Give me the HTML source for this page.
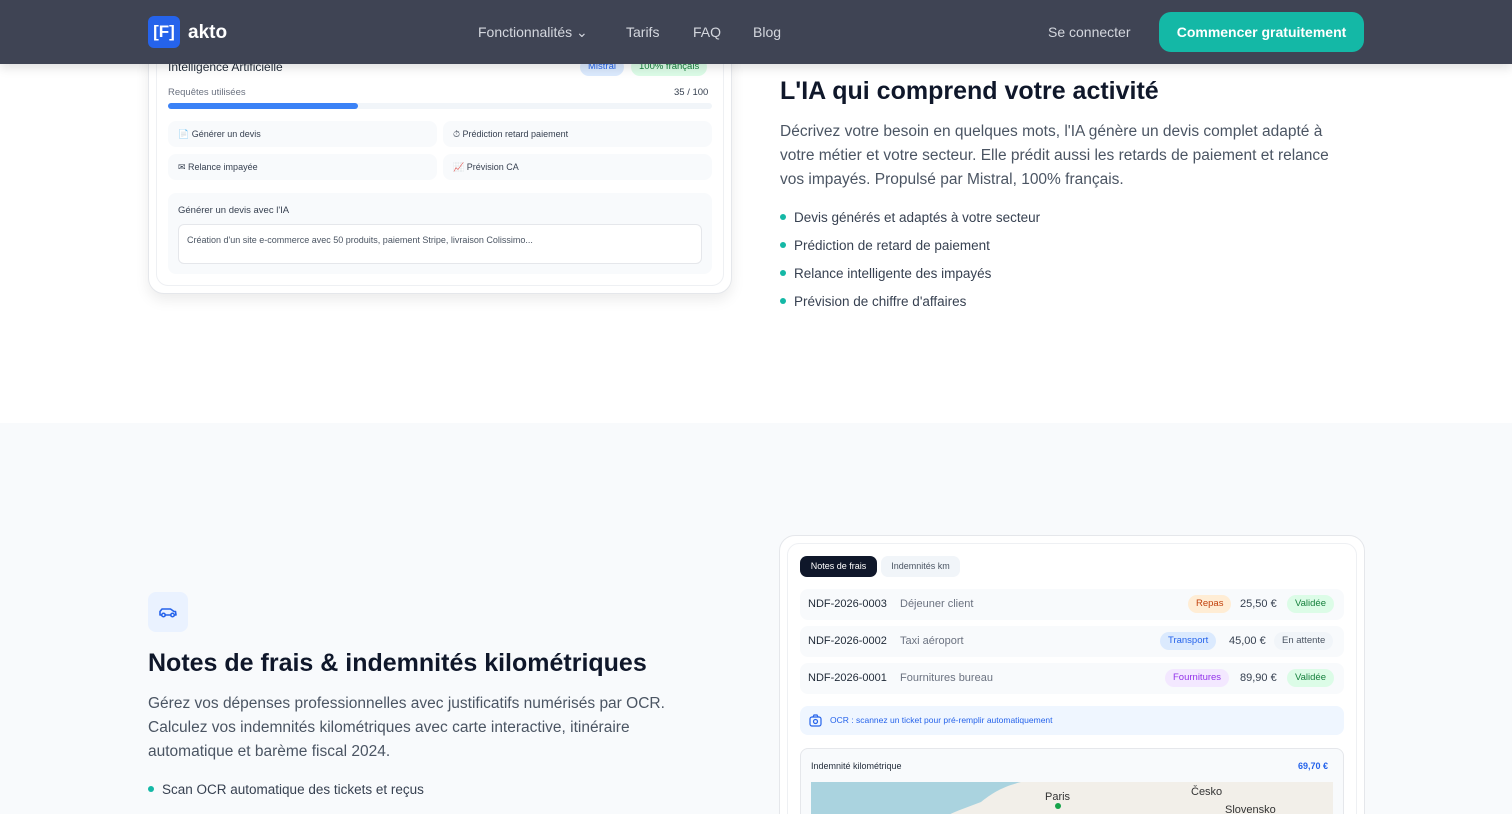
<!DOCTYPE html>
<html><head><meta charset="utf-8"><style>
*{box-sizing:border-box;margin:0;padding:0}
html,body{width:1512px;height:814px;overflow:hidden}
body{font-family:"Liberation Sans",sans-serif;background:#fff;position:relative;color:#0f172a}
.abs{position:absolute}
nav{position:absolute;left:0;top:0;width:1512px;height:64px;background:#3f4454;z-index:10;box-shadow:0 4px 10px rgba(0,0,0,.12)}
.logo{left:148px;top:16px;width:32px;height:32px;background:#2563eb;border-radius:6px;color:#fff;font-weight:bold;font-size:17px;text-align:center;line-height:32px}
.nl{color:#d4d7de;font-size:14px;top:24px}
.btn{left:1159px;top:12px;width:205px;height:40px;background:#14b8a6;border-radius:12px;color:#fff;font-weight:bold;font-size:14px;text-align:center;line-height:40px}
.card{left:148px;top:20px;width:584px;height:274px;border:1px solid #e5e7eb;border-radius:16px;box-shadow:0 6px 14px rgba(0,0,0,.08);background:#fff}
.inner{left:156px;top:28px;width:568px;height:258px;border:1px solid #eef0f3;border-radius:12px}
.pill{background:#f8fafc;border-radius:8px;height:26px;font-size:9px;color:#374151;line-height:26px;padding-left:10px}
.tag{border-radius:10px;font-size:9.5px;height:18px;line-height:18px;padding:0 8px;position:absolute}
h2{font-size:25px;font-weight:bold;color:#0f172a}
.p{font-size:15.5px;line-height:24px;color:#4b5563}
.li{font-size:13.5px;color:#374151}
.li:before{content:"";display:inline-block;width:6px;height:6px;border-radius:50%;background:#14b8a6;margin-right:8px;vertical-align:2px}
.row{left:800px;width:544px;height:31px;background:#f8fafc;border-radius:8px;font-size:11px}
.row .id{position:absolute;left:8px;top:9px;color:#1f2937}
.row .d{position:absolute;left:100px;top:9px;color:#6b7280}
.row .am{position:absolute;top:9px;color:#374151}
</style></head><body>
<div class="abs card"></div>
<div class="abs inner"></div>
<div class="abs" style="left:168px;top:60px;font-size:12px;color:#1f2937">Intelligence Artificielle</div>
<div class="tag" style="left:580px;top:58px;background:#dbeafe;color:#2563eb">Mistral</div>
<div class="tag" style="left:631px;top:58px;background:#dcfce7;color:#15803d">100% français</div>
<div class="abs" style="left:168px;top:87px;font-size:9.5px;color:#6b7280">Requêtes utilisées</div>
<div class="abs" style="left:674px;top:87px;font-size:9.5px;color:#374151">35 / 100</div>
<div class="abs" style="left:168px;top:103px;width:544px;height:6px;background:#f1f5f9;border-radius:3px"><div style="width:190px;height:6px;background:#3b82f6;border-radius:3px"></div></div>
<div class="abs pill" style="left:168px;top:121px;width:269px">📄 Générer un devis</div>
<div class="abs pill" style="left:443px;top:121px;width:269px">⏱ Prédiction retard paiement</div>
<div class="abs pill" style="left:168px;top:154px;width:269px">✉ Relance impayée</div>
<div class="abs pill" style="left:443px;top:154px;width:269px">📈 Prévision CA</div>
<div class="abs" style="left:168px;top:193px;width:544px;height:81px;background:#f8fafc;border-radius:8px"></div>
<div class="abs" style="left:178px;top:205px;font-size:9.5px;color:#374151">Générer un devis avec l'IA</div>
<div class="abs" style="left:178px;top:224px;width:524px;height:40px;background:#fff;border:1px solid #e5e7eb;border-radius:6px;font-size:9px;color:#4b5563;padding:10px 8px">Création d'un site e-commerce avec 50 produits, paiement Stripe, livraison Colissimo...</div>

<h2 class="abs" style="left:780px;top:77px">L'IA qui comprend votre activité</h2>
<div class="abs p" style="left:780px;top:120px;width:572px">Décrivez votre besoin en quelques mots, l'IA génère un devis complet adapté à votre métier et votre secteur. Elle prédit aussi les retards de paiement et relance vos impayés. Propulsé par Mistral, 100% français.</div>
<div class="abs li" style="left:780px;top:210px">Devis générés et adaptés à votre secteur</div>
<div class="abs li" style="left:780px;top:238px">Prédiction de retard de paiement</div>
<div class="abs li" style="left:780px;top:266px">Relance intelligente des impayés</div>
<div class="abs li" style="left:780px;top:294px">Prévision de chiffre d'affaires</div>

<div class="abs" style="left:0;top:423px;width:1512px;height:391px;background:#f8fafc"></div>
<div class="abs" style="left:148px;top:592px;width:40px;height:40px;background:#eaf2ff;border-radius:8px">
<svg width="40" height="40" viewBox="0 0 40 40"><path d="M13.5 23h-1.5v-3.5l2-2.5h8.5l3.5 2.5h1.5l.5 3.5h-1.5M17 23h6" fill="none" stroke="#2563eb" stroke-width="1.6" stroke-linejoin="round" stroke-linecap="round"/><circle cx="15.5" cy="23" r="1.8" fill="none" stroke="#2563eb" stroke-width="1.5"/><circle cx="24.5" cy="23" r="1.8" fill="none" stroke="#2563eb" stroke-width="1.5"/></svg></div>
<h2 class="abs" style="left:148px;top:649px">Notes de frais &amp; indemnités kilométriques</h2>
<div class="abs p" style="left:148px;top:692px;width:545px">Gérez vos dépenses professionnelles avec justificatifs numérisés par OCR. Calculez vos indemnités kilométriques avec carte interactive, itinéraire automatique et barème fiscal 2024.</div>
<div class="abs li" style="left:148px;top:782px">Scan OCR automatique des tickets et reçus</div>

<div class="abs" style="left:779px;top:535px;width:586px;height:300px;background:#fff;border:1px solid #e5e7eb;border-radius:16px"></div>
<div class="abs" style="left:787px;top:543px;width:570px;height:290px;border:1px solid #eef0f3;border-radius:12px"></div>
<div class="abs" style="left:800px;top:556px;width:77px;height:21px;background:#0f172a;color:#fff;border-radius:7px;font-size:9px;line-height:21px;text-align:center">Notes de frais</div>
<div class="abs" style="left:881px;top:556px;width:79px;height:21px;background:#f1f5f9;color:#4b5563;border-radius:7px;font-size:9px;line-height:21px;text-align:center">Indemnités km</div>
<div class="abs row" style="top:589px"><span class="id">NDF-2026-0003</span><span class="d">Déjeuner client</span><span class="tag" style="left:388px;top:6px;background:#ffedd5;color:#c2410c">Repas</span><span class="am" style="left:440px">25,50 €</span><span class="tag" style="left:487px;top:6px;background:#dcfce7;color:#15803d">Validée</span></div>
<div class="abs row" style="top:626px"><span class="id">NDF-2026-0002</span><span class="d">Taxi aéroport</span><span class="tag" style="left:360px;top:6px;background:#dbeafe;color:#2563eb">Transport</span><span class="am" style="left:429px">45,00 €</span><span class="tag" style="left:474px;top:6px;background:#f1f5f9;color:#4b5563">En attente</span></div>
<div class="abs row" style="top:663px"><span class="id">NDF-2026-0001</span><span class="d">Fournitures bureau</span><span class="tag" style="left:365px;top:6px;background:#f3e8ff;color:#9333ea">Fournitures</span><span class="am" style="left:440px">89,90 €</span><span class="tag" style="left:487px;top:6px;background:#dcfce7;color:#15803d">Validée</span></div>
<div class="abs" style="left:800px;top:706px;width:544px;height:29px;background:#eff6ff;border-radius:8px;font-size:8.5px;color:#2563eb;line-height:29px;padding-left:30px">OCR : scannez un ticket pour pré-remplir automatiquement
<svg class="abs" style="left:9px;top:8px" width="13" height="13" viewBox="0 0 13 13"><rect x="1" y="3" width="11" height="9" rx="2" fill="none" stroke="#2563eb" stroke-width="1.2"/><circle cx="6.5" cy="7.5" r="2" fill="none" stroke="#2563eb" stroke-width="1.2"/><path d="M4 3l1-2h3l1 2" fill="none" stroke="#2563eb" stroke-width="1.2"/></svg></div>
<div class="abs" style="left:800px;top:748px;width:544px;height:80px;background:#f8fafc;border:1px solid #e5e7eb;border-radius:8px"></div>
<div class="abs" style="left:811px;top:761px;font-size:9px;color:#1f2937">Indemnité kilométrique</div>
<div class="abs" style="left:1298px;top:761px;font-size:9px;color:#2563eb;font-weight:bold">69,70 €</div>
<svg class="abs" style="left:811px;top:782px" width="522" height="40"><rect width="522" height="40" fill="#f2efe9"/><path d="M0 0h210c-20 5-30 12-40 20c-15 6-30 10-45 20H0z" fill="#aad3df"/><text x="234" y="18" font-size="11" font-family="Liberation Sans" fill="#333">Paris</text><text x="380" y="13" font-size="11" font-family="Liberation Sans" fill="#333">Česko</text><text x="414" y="31" font-size="11" font-family="Liberation Sans" fill="#333">Slovensko</text><circle cx="247" cy="24" r="3" fill="#16a34a"/></svg>

<nav>
<div class="abs logo">[F]</div>
<div class="abs" style="left:188px;top:22px;color:#fff;font-size:19px;font-weight:bold">akto</div>
<div class="abs nl" style="left:478px">Fonctionnalités ⌄</div>
<div class="abs nl" style="left:626px">Tarifs</div>
<div class="abs nl" style="left:693px">FAQ</div>
<div class="abs nl" style="left:753px">Blog</div>
<div class="abs nl" style="left:1048px">Se connecter</div>
<div class="abs btn">Commencer gratuitement</div>
</nav>
</body></html>
